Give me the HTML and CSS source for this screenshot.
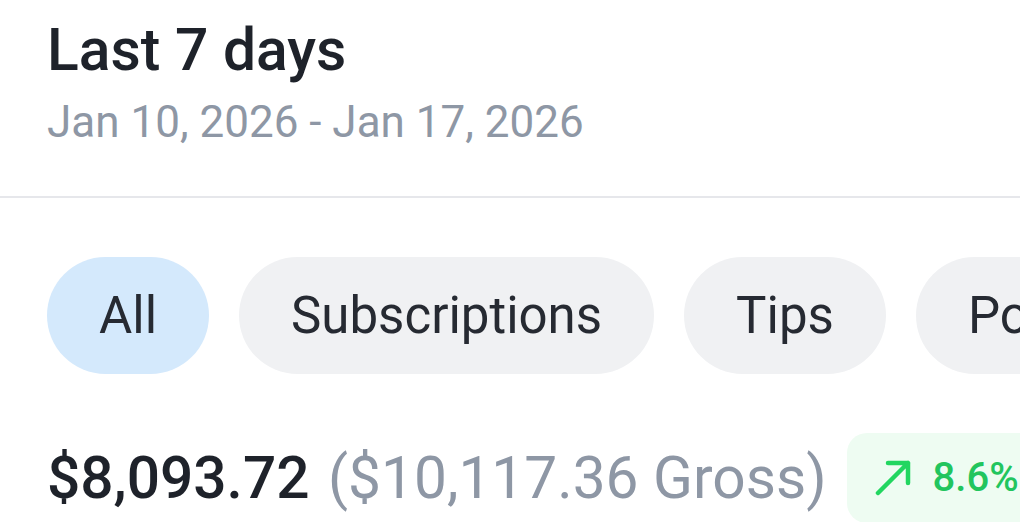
FILE: index.html
```html
<!DOCTYPE html>
<html lang="en">
<head>
<meta charset="utf-8">
<title>Earnings</title>
<link rel="stylesheet" href="styles.css">
</head>
<body>
  <div class="page">
    <header class="header">
      <h1 class="title">Last 7 days</h1>
      <div class="range">Jan 10, 2026 - Jan 17, 2026</div>
    </header>
    <section class="content">
      <nav class="pills">
        <button class="pill active">All</button>
        <button class="pill">Subscriptions</button>
        <button class="pill">Tips</button>
        <button class="pill">Posts</button>
        <button class="pill">Messages</button>
      </nav>
      <div class="summary">
        <div class="amounts"><span class="net">$8,093.72</span> <span class="gross">($10,117.36 Gross)</span></div>
        <div class="badge">
          <svg class="arrow" width="36" height="36" viewBox="0 0 36 36" aria-hidden="true">
            <path d="M3 33 L33 3 M13 3 H33 V23" fill="none" stroke="currentColor" stroke-width="4.5" stroke-linecap="round" stroke-linejoin="round"/>
          </svg>
          <span class="pct">8.6%</span>
        </div>
      </div>
    </section>
  </div>
</body>
</html>
```

FILE: styles.css
```css
* { box-sizing: border-box; }
html, body { margin: 0; padding: 0; background: #ffffff; }
body {
  font-family: Roboto, "Noto Sans", "Liberation Sans", sans-serif;
  color: #1e222a;
  overflow: hidden;
}
.page { width: 1020px; overflow: hidden; }
.header {
  padding: 14px 47px 41px;
  border-bottom: 2px solid #e6e7eb;
}
.title {
  margin: 0;
  font-size: 58.8px;
  line-height: 72px;
  font-weight: 500;
  color: #1e222a;
}
.range {
  margin-top: 3px;
  font-size: 44px;
  line-height: 66px;
  color: #8e97a5;
}
.content {
  padding: 59px 0 0 47px;
}
.pills {
  display: flex;
  gap: 30px;
  white-space: nowrap;
}
.pill {
  flex: none;
  border: 0;
  margin: 0;
  font-family: inherit;
  font-size: 51px;
  line-height: 75px;
  padding: 21px 52px;
  border-radius: 9999px;
  background: #f0f1f3;
  color: #262a32;
}
.pill.active { background: #d4e9fc; }
.summary {
  display: flex;
  align-items: center;
  gap: 20px;
  margin-top: 59px;
  white-space: nowrap;
}
.amounts {
  font-size: 58.6px;
  line-height: 90px;
}
.net { font-weight: 500; color: #1e222a; }
.gross { margin-left: 4px; color: #8e97a5; }
.badge {
  flex: none;
  display: flex;
  align-items: center;
  gap: 22px;
  height: 90px;
  padding: 0 28px 0 28px;
  border-radius: 20px;
  background: #eefcf2;
  color: #22c55e;
}
.arrow { color: #22d660; flex: none; }
.pct {
  font-size: 40px;
  font-weight: 500;
  line-height: 60px;
}
```
